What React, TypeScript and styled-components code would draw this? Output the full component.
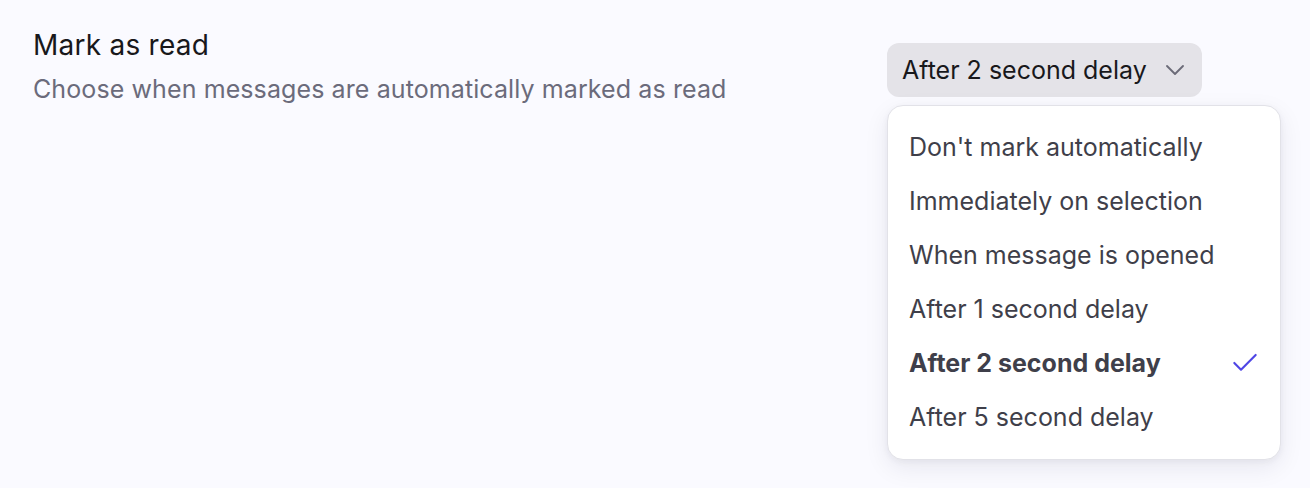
import React from 'react';
import styled, { createGlobalStyle } from 'styled-components';
import { ChevronDown, Check } from 'lucide-react';

const GlobalStyle = createGlobalStyle`
  html, body {
    margin: 0;
    padding: 0;
    background: #fafaff;
  }
  body {
    font-family: Inter, 'Noto Sans', sans-serif;
    -webkit-font-smoothing: antialiased;
  }
`;

const Page = styled.main`
  min-height: 488px;
  box-sizing: border-box;
  padding: 27px 29px 0 33px;
  display: flex;
  justify-content: space-between;
  align-items: flex-start;
`;

const Info = styled.div`
  display: flex;
  flex-direction: column;
  gap: 10px;
`;

const Title = styled.h2`
  margin: 0;
  font-size: 28px;
  line-height: 36px;
  font-weight: 400;
  letter-spacing: 0.25px;
  color: #18181b;
`;

const Subtitle = styled.p`
  margin: 0;
  font-size: 25px;
  line-height: 32px;
  font-weight: 400;
  letter-spacing: 0.1px;
  color: #6b6b7b;
`;

const SelectWrap = styled.div`
  position: relative;
  width: 394px;
  padding-top: 16px;
`;

const Trigger = styled.button.attrs({ type: 'button' })`
  display: inline-flex;
  align-items: center;
  gap: 12px;
  height: 54px;
  padding: 0 11px 0 15px;
  border: 0;
  border-radius: 12px;
  background: #e4e3e8;
  color: #18181b;
  font-family: inherit;
  font-size: 25px;
  cursor: pointer;

  svg {
    color: #6b6b78;
  }
`;

const Menu = styled.ul`
  position: absolute;
  top: 78px;
  left: 0;
  right: 0;
  margin: 0;
  padding: 14px 0 15px;
  list-style: none;
  background: #fff;
  border: 1px solid #e2e2e8;
  border-radius: 16px;
  box-shadow: 0 8px 24px rgba(30, 30, 60, 0.08), 0 2px 6px rgba(30, 30, 60, 0.05);
`;

const Item = styled.li<{ $selected?: boolean }>`
  display: flex;
  align-items: center;
  justify-content: space-between;
  height: 54px;
  padding: 0 19px 0 21px;
  font-size: 25px;
  font-weight: ${p => (p.$selected ? 700 : 400)};
  color: #3f3f4a;

  svg {
    color: #4f46e5;
  }
`;

const OPTIONS = [
  "Don't mark automatically",
  'Immediately on selection',
  'When message is opened',
  'After 1 second delay',
  'After 2 second delay',
  'After 5 second delay',
];

export default function App() {
  const selected = 'After 2 second delay';
  return (
    <>
      <GlobalStyle />
      <Page>
        <Info>
          <Title>Mark as read</Title>
          <Subtitle>Choose when messages are automatically marked as read</Subtitle>
        </Info>
        <SelectWrap>
          <Trigger>
            {selected}
            <ChevronDown size={32} strokeWidth={1.4} />
          </Trigger>
          <Menu>
            {OPTIONS.map(o => (
              <Item key={o} $selected={o === selected}>
                {o}
                {o === selected && <Check size={32} strokeWidth={1.6} />}
              </Item>
            ))}
          </Menu>
        </SelectWrap>
      </Page>
    </>
  );
}
